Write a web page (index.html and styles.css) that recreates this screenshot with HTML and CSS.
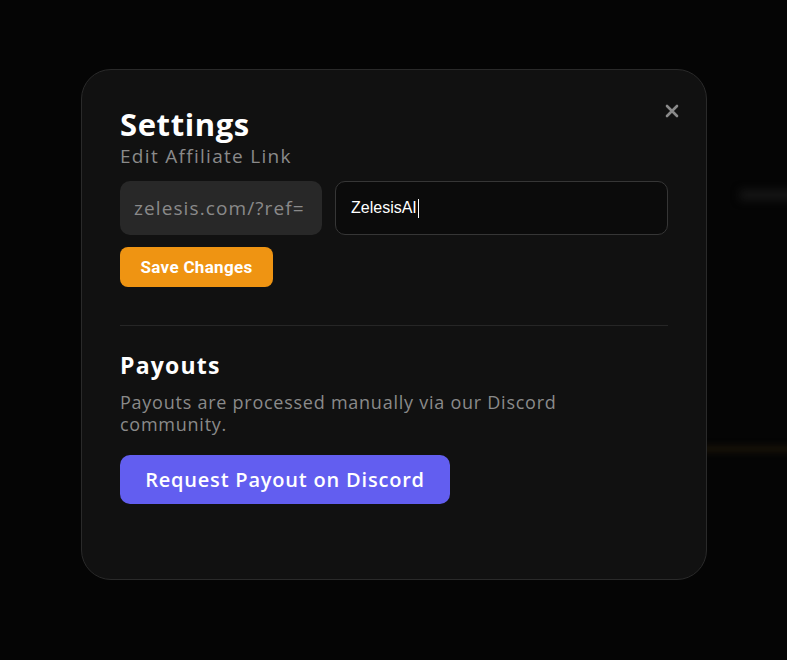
FILE: index.html
```html
<!DOCTYPE html>
<html lang="en">
  <head>
    <meta charset="UTF-8" />
    <meta name="viewport" content="width=device-width, initial-scale=1.0" />
    <title>Settings</title>
    <link rel="stylesheet" href="styles.css">
  </head>
  <body>
    <div class="backdrop">
      <!-- Página detrás del modal, borrosa -->
      <div class="ghost-block"></div>
      <div class="ghost-line"></div>
    </div>

    <div class="modal">
      <button class="close-btn" aria-label="Close">
        <svg width="14" height="14" viewBox="0 0 14 14">
          <path d="M2 2 L12 12 M12 2 L2 12" stroke="#8a8a8a" stroke-width="2.6" stroke-linecap="round" />
        </svg>
      </button>

      <h2 class="modal-title">Settings</h2>
      <p class="modal-subtitle">Edit Affiliate Link</p>

      <div class="link-row">
        <div class="link-prefix">zelesis.com/?ref=</div>
        <div class="link-input">ZelesisAI<span class="caret"></span></div>
      </div>
      <button class="save-btn">Save Changes</button>

      <hr class="divider" />

      <h3 class="section-title">Payouts</h3>
      <p class="section-text">Payouts are processed manually via our Discord community.</p>
      <button class="discord-btn">Request Payout on Discord</button>
    </div>
  </body>
</html>
```

FILE: styles.css
```css
body {
  margin: 0;
  background-color: #050505;
  font-family: "Open Sans", sans-serif;
  height: 660px;
  overflow: hidden;
}

.backdrop {
  position: absolute;
  inset: 0;
}

.ghost-block {
  position: absolute;
  top: 190px;
  left: 740px;
  width: 60px;
  height: 10px;
  background-color: #161616;
  filter: blur(4px);
}

.ghost-line {
  position: absolute;
  top: 446px;
  left: 700px;
  width: 100px;
  height: 6px;
  background-color: #1a1408;
  filter: blur(3px);
}

.modal {
  position: relative;
  box-sizing: border-box;
  width: 626px;
  margin: 69px 0 0 81px;
  padding: 36px 38px 75px 38px;
  background-color: #111111;
  border: 1px solid #2a2a2a;
  border-radius: 30px;
}

.close-btn {
  position: absolute;
  top: 34px;
  right: 27px;
  background: none;
  border: none;
  padding: 0;
  cursor: pointer;
}

.modal-title {
  margin: 0;
  color: #ffffff;
  font-size: 31px;
  font-weight: 700;
  line-height: 36px;
  letter-spacing: 0.6px;
}

.modal-subtitle {
  margin: 2px 0 13px;
  color: #8a8a8a;
  font-size: 19px;
  line-height: 24px;
  letter-spacing: 1.3px;
}

.link-row {
  display: flex;
  gap: 13px;
}

.link-prefix {
  display: flex;
  align-items: center;
  width: 202px;
  height: 54px;
  box-sizing: border-box;
  padding: 0 14px;
  background-color: #282828;
  border-radius: 10px;
  color: #8a8a8a;
  font-size: 19px;
  letter-spacing: 1.1px;
  white-space: nowrap;
}

.link-input {
  display: flex;
  align-items: center;
  flex: 1;
  height: 54px;
  box-sizing: border-box;
  padding: 0 15px;
  background-color: #0b0b0b;
  border: 1px solid #363636;
  border-radius: 10px;
  color: #ffffff;
  font-family: "Liberation Sans", Arial, sans-serif;
  font-size: 16px;
}

.caret {
  display: inline-block;
  width: 1px;
  height: 19px;
  margin-left: 1px;
  background-color: #ffffff;
}

.save-btn {
  margin-top: 12px;
  width: 153px;
  height: 40px;
  padding: 0;
  background-color: #ef9412;
  border: none;
  border-radius: 8px;
  color: #ffffff;
  font-family: Roboto, sans-serif;
  font-size: 17px;
  font-weight: 700;
  letter-spacing: 0.3px;
  cursor: pointer;
}

.divider {
  margin: 38px 0 25px;
  border: none;
  border-top: 1px solid #262626;
}

.section-title {
  margin: 0 0 12px;
  color: #ffffff;
  font-size: 23px;
  font-weight: 700;
  line-height: 28px;
  letter-spacing: 1.2px;
}

.section-text {
  margin: 0 0 20px;
  color: #8a8a8a;
  font-size: 18px;
  line-height: 22px;
  letter-spacing: 0.75px;
  max-width: 500px;
}

.discord-btn {
  width: 330px;
  height: 49px;
  background-color: #625ef0;
  border: none;
  border-radius: 10px;
  color: #ffffff;
  font-family: "Open Sans", sans-serif;
  font-size: 20px;
  font-weight: 600;
  letter-spacing: 0.8px;
  cursor: pointer;
}
```
